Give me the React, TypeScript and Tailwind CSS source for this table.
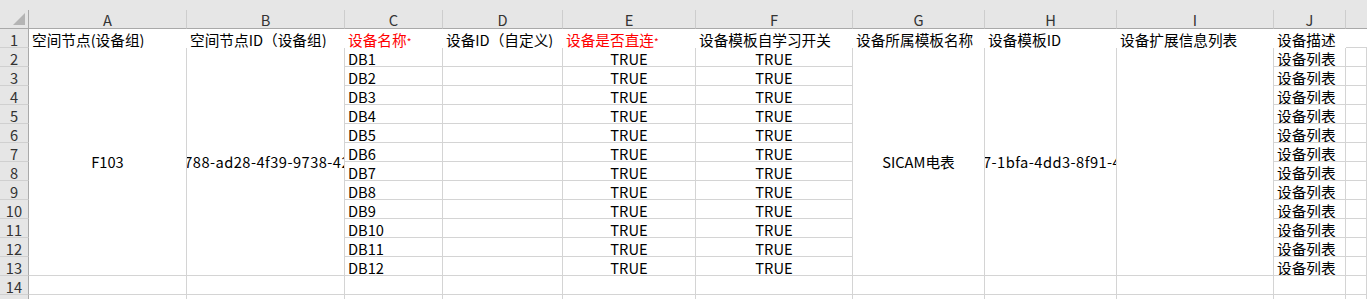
import React from "react";

const LETTERS = ["A", "B", "C", "D", "E", "F", "G", "H", "I", "J"];
const DEVICES = Array.from({ length: 12 }, (_, i) => `DB${i + 1}`);

const grid = "border-r border-b border-[#d4d4d4]";
const txt = "pt-[3px] leading-[16px] whitespace-nowrap overflow-hidden";

function RowHead({ n }: { n: number }) {
  return (
    <div className="bg-[#e6e6e6] border-r border-r-[#a9a9a9] border-b border-b-[#d0d0d0] text-center text-[#333] pt-[3px] leading-[16px]">
      {n}
    </div>
  );
}

function Cell({ children, className = "" }: { children?: React.ReactNode; className?: string }) {
  return <div className={`${grid} ${txt} ${className}`}>{children}</div>;
}

function Merged({ children, className = "" }: { children?: React.ReactNode; className?: string }) {
  return (
    <div className={`row-span-12 ${grid} flex items-center overflow-hidden whitespace-nowrap ${className}`}>
      {children}
    </div>
  );
}

export default function App() {
  return (
    <div className="w-[1367px] h-[299px] overflow-hidden bg-white text-black text-[14.67px] font-['Noto_Sans_CJK_SC','Noto_Sans',sans-serif] grid grid-cols-[29px_158px_158px_98px_120px_133px_157px_132px_132px_157px_72px_1fr] grid-rows-[10px_19px_repeat(15,19px)]">
      {/* frame band above the column headers */}
      <div className="col-span-12 bg-[#e6e6e6]" />

      {/* column headers */}
      <div className="bg-[#e6e6e6] border-r border-b border-[#a9a9a9]">
        <svg width="28" height="18" viewBox="0 0 28 18" className="block">
          <polygon points="25,3 25,15 13,15" fill="#b4b4b4" />
        </svg>
      </div>
      {LETTERS.map((l) => (
        <div
          key={l}
          className="bg-[#e6e6e6] border-r border-r-[#cdcdcd] border-b border-b-[#a9a9a9] text-center text-[#333] pt-[2px] leading-[16px]"
        >
          {l}
        </div>
      ))}
      <div className="bg-[#e6e6e6] border-b border-b-[#a9a9a9]" />

      {/* row 1: header labels on white fill */}
      <RowHead n={1} />
      <div className={`${txt} bg-white pl-[3px]`}>空间节点(设备组)</div>
      <div className={`${txt} bg-white pl-[3px]`}>空间节点ID（设备组)</div>
      <div className={`${txt} bg-white pl-[3px] text-[#ff0000]`}>
        设备名称<span className="text-[10px]">*</span>
      </div>
      <div className={`${txt} bg-white pl-[3px]`}>设备ID（自定义)</div>
      <div className={`${txt} bg-white pl-[3px] text-[#ff0000]`}>
        设备是否直连<span className="text-[10px]">*</span>
      </div>
      <div className={`${txt} bg-white pl-[3px]`}>设备模板自学习开关</div>
      <div className={`${txt} bg-white pl-[3px]`}>设备所属模板名称</div>
      <div className={`${txt} bg-white pl-[3px]`}>设备模板ID</div>
      <div className={`${txt} bg-white pl-[3px]`}>设备扩展信息列表</div>
      <div className={`${txt} bg-white pl-[3px]`}>设备描述</div>
      <div className="border-b border-[#d4d4d4]" />

      {/* rows 2–13 */}
      {DEVICES.map((d, i) => (
        <React.Fragment key={d}>
          <RowHead n={i + 2} />
          {i === 0 && (
            <>
              <Merged className="justify-center">F103</Merged>
              <Merged>
                <span className="-ml-[45px] tracking-[0.45px]">5e0c9788-ad28-4f39-9738-42c6e1d0a3f5</span>
              </Merged>
            </>
          )}
          <Cell className="pl-[3px]">{d}</Cell>
          <Cell />
          <Cell className="text-center">TRUE</Cell>
          <Cell className="text-center">TRUE</Cell>
          {i === 0 && (
            <>
              <Merged className="justify-center">SICAM电表</Merged>
              <Merged>
                <span className="-ml-[2px] tracking-[0.45px]">7-1bfa-4dd3-8f91-4b0e7a2c9d61</span>
              </Merged>
              <Merged />
            </>
          )}
          <Cell className="pl-[3px]">设备列表</Cell>
          <Cell />
        </React.Fragment>
      ))}

      {/* rows 14–15: empty */}
      {[14, 15].map((n) => (
        <React.Fragment key={n}>
          <RowHead n={n} />
          {Array.from({ length: 11 }, (_, c) => (
            <Cell key={c} />
          ))}
        </React.Fragment>
      ))}
    </div>
  );
}
